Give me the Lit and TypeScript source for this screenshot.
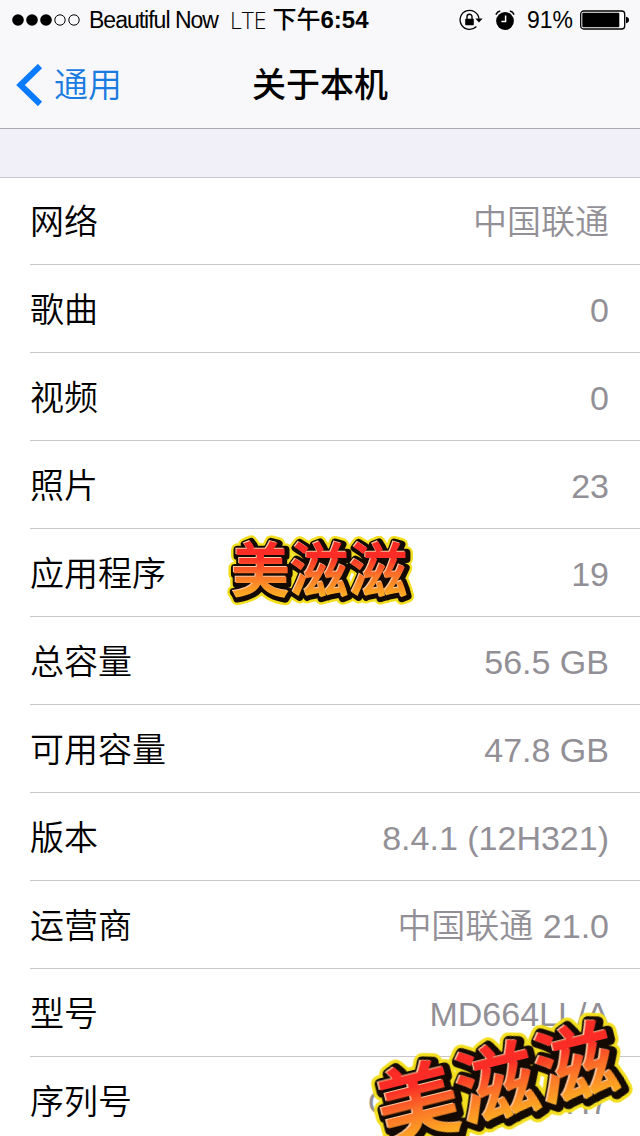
import { LitElement, html, svg, css } from "lit";
import { customElement, property } from "lit/decorators.js";

const ROWS: { label: string; value: string }[] = [
  { label: "网络", value: "中国联通" },
  { label: "歌曲", value: "0" },
  { label: "视频", value: "0" },
  { label: "照片", value: "23" },
  { label: "应用程序", value: "19" },
  { label: "总容量", value: "56.5 GB" },
  { label: "可用容量", value: "47.8 GB" },
  { label: "版本", value: "8.4.1 (12H321)" },
  { label: "运营商", value: "中国联通 21.0" },
  { label: "型号", value: "MD664LL/A" },
  { label: "序列号", value: "C39JP4LTF0H7" },
];

@customElement("status-bar")
class StatusBar extends LitElement {
  static styles = css`
    :host {
      display: flex;
      align-items: center;
      justify-content: space-between;
      height: 40px;
      padding: 0 11px 0 12px;
      font-size: 23px;
      line-height: 40px;
      color: #000;
      white-space: nowrap;
    }
    .side {
      display: flex;
      align-items: center;
    }
    .dots {
      width: 69px;
      height: 12px;
      margin-right: 8px;
    }
    .carrier {
      letter-spacing: -1px;
      margin-right: 12px;
    }
    .net {
      font-family: "Open Sans", "Noto Sans", sans-serif;
      font-weight: 300;
      margin-right: 6px;
    }
    .time {
      font-size: 24px;
      font-weight: 700;
    }
    .time-cjk {
      font-weight: 500;
    }
    .lock {
      width: 24px;
      height: 22px;
      margin-right: 12px;
    }
    .alarm {
      width: 20px;
      height: 20px;
      margin-right: 12px;
    }
    .percent {
      margin-right: 7px;
    }
    .battery {
      width: 49px;
      height: 20px;
    }
  `;

  render() {
    return html`
      <div class="side">
        <svg class="dots" viewBox="0 0 69 12" role="img" aria-label="信号">
          ${[0, 1, 2, 3, 4].map(
            (i) => svg`<circle cx=${6 + i * 14} cy="6" r=${i < 3 ? 5.8 : 5.2}
              fill=${i < 3 ? "#000" : "none"} stroke=${i < 3 ? "none" : "#000"} stroke-width="1"/>`
          )}
        </svg>
        <span class="carrier">Beautiful Now</span>
        <span class="net">LTE</span>
        <span class="time"><span class="time-cjk">下午</span>6:54</span>
      </div>
      <div class="side">
        <svg class="lock" viewBox="0 0 24 22" aria-hidden="true">
          <path d="M20 9.6A9.500 9.500 0 1 0 17.400 17.500" fill="none" stroke="#000" stroke-width="1.3" />
          <path d="M16.400 9.600h7.200l-3.600 3.800z" />
          <rect x="6.200" y="9.800" width="8.600" height="6.400" rx="0.6" />
          <path d="M8 10.500V7.800a2.500 2.500 0 0 1 5 0V10.500" fill="none" stroke="#000" stroke-width="1.400" />
        </svg>
        <svg class="alarm" viewBox="0 0 20 20" aria-hidden="true">
          <circle cx="10" cy="11" r="8.900" />
          <path d="M0.900 4.600C1.700 2.800 3.200 1.500 5.200 1.100M14.800 1.100C16.800 1.500 18.300 2.800 19.100 4.600" fill="none" stroke="#000" stroke-width="1.500" />
          <path d="M10.600 5.600v6H6.400" fill="none" stroke="#fff" stroke-width="1.500" />
        </svg>
        <span class="percent">91%</span>
        <svg class="battery" viewBox="0 0 49 20" role="img" aria-label="电池">
          <rect x="0.700" y="1" width="44" height="18" rx="3" fill="#fff" stroke="#000" stroke-width="1.300" />
          <rect x="2.300" y="2.700" width="37" height="14.600" rx="1" />
          <path d="M46 6.800c2 .4 3 1.400 3 3.200s-1 2.800-3 3.200z" />
        </svg>
      </div>
    `;
  }
}

@customElement("flame-sticker")
class FlameSticker extends LitElement {
  @property() text = "";

  static styles = css`
    :host {
      display: block;
      pointer-events: none;
    }
    .art {
      display: block;
      width: 100%;
      overflow: visible;
    }
    .word {
      font-family: "Noto Sans CJK SC", sans-serif;
      font-size: 59px;
      font-weight: 700;
      stroke-linejoin: round;
    }
    .halo {
      fill: #f3df20;
      stroke: #f3df20;
      stroke-width: 13px;
    }
    .edge {
      fill: #140a04;
      stroke: #140a04;
      stroke-width: 8px;
    }
    .shine {
      fill: #ffc9a0;
    }
    .fire {
      fill: url(#fire);
    }
  `;

  render() {
    return html`
      <svg class="art" viewBox="0 0 184 66" role="img" aria-label=${this.text}>
        <defs>
          <linearGradient id="fire" gradientUnits="userSpaceOnUse" x1="0" y1="8" x2="0" y2="58">
            <stop offset="0.2" stop-color="#fb2b25" />
            <stop offset="0.55" stop-color="#fb7028" />
            <stop offset="1" stop-color="#fdb022" />
          </linearGradient>
        </defs>
        <text class="word halo" x="4" y="54">${this.text}</text>
        <text class="word edge" x="4" y="54">${this.text}</text>
        <text class="word shine" x="2" y="52">${this.text}</text>
        <text class="word fire" x="3" y="53">${this.text}</text>
      </svg>
    `;
  }
}

@customElement("app-root")
class AppRoot extends LitElement {
  static styles = css`
    :host {
      display: flex;
      flex-direction: column;
      position: relative;
      height: 100vh;
      overflow: hidden;
      background: #fff;
      font-family: "Liberation Sans", "Noto Sans CJK SC", sans-serif;
    }
    .top {
      flex: none;
      background: #f8f8fa;
      border-bottom: 1px solid #a9a6b1;
    }
    .nav {
      display: grid;
      grid-template-columns: 1fr auto 1fr;
      align-items: center;
      box-sizing: border-box;
      height: 88px;
      padding: 2px 16px 0;
      font-size: 34px;
      line-height: 40px;
    }
    .back {
      display: flex;
      align-items: center;
      gap: 11px;
      justify-self: start;
      color: #1a7be0;
      font-weight: 350;
      text-decoration: none;
    }
    .chevron {
      width: 27px;
      height: 42px;
    }
    .title {
      margin: 0;
      font-size: 34px;
      font-weight: 500;
      color: #000;
    }
    .scroll {
      flex: 1;
      min-height: 0;
      overflow-y: auto;
      scrollbar-width: none;
      padding-top: 48px;
      background: #f1eff8;
    }
    .list {
      margin: 0;
      background: #fff;
      box-shadow: inset 0 1px #c8c7cc;
    }
    .row {
      display: flex;
      align-items: center;
      justify-content: space-between;
      box-sizing: border-box;
      height: 88px;
      margin-left: 30px;
      padding: 2px 31px 0 0;
      border-bottom: 1px solid #c8c7cc;
      font-size: 34px;
      line-height: 48px;
      white-space: nowrap;
    }
    .label {
      color: #000;
      font-weight: 350;
    }
    .value {
      margin: 0;
      color: #929096;
      font-weight: 350;
    }
    .sticker {
      position: absolute;
    }
    .small {
      left: 228px;
      top: 539px;
      width: 184px;
    }
    .large {
      left: 371px;
      top: 1040px;
      width: 254px;
      transform: rotate(-14deg);
    }
  `;

  render() {
    return html`
      <header class="top">
        <status-bar></status-bar>
        <nav class="nav">
          <a class="back" href="#general">
            <svg class="chevron" viewBox="0 0 27 42" aria-hidden="true">
              <path d="M24 2L4.500 21L24 40" fill="none" stroke="#0a7aff" stroke-width="6" />
            </svg>
            <span>通用</span>
          </a>
          <h1 class="title">关于本机</h1>
        </nav>
      </header>
      <main class="scroll">
        <dl class="list">
          ${ROWS.map(
            (r) => html`<div class="row">
              <dt class="label">${r.label}</dt>
              <dd class="value">${r.value}</dd>
            </div>`
          )}
        </dl>
      </main>
      <flame-sticker class="sticker small" text="美滋滋"></flame-sticker>
      <flame-sticker class="sticker large" text="美滋滋"></flame-sticker>
    `;
  }
}
